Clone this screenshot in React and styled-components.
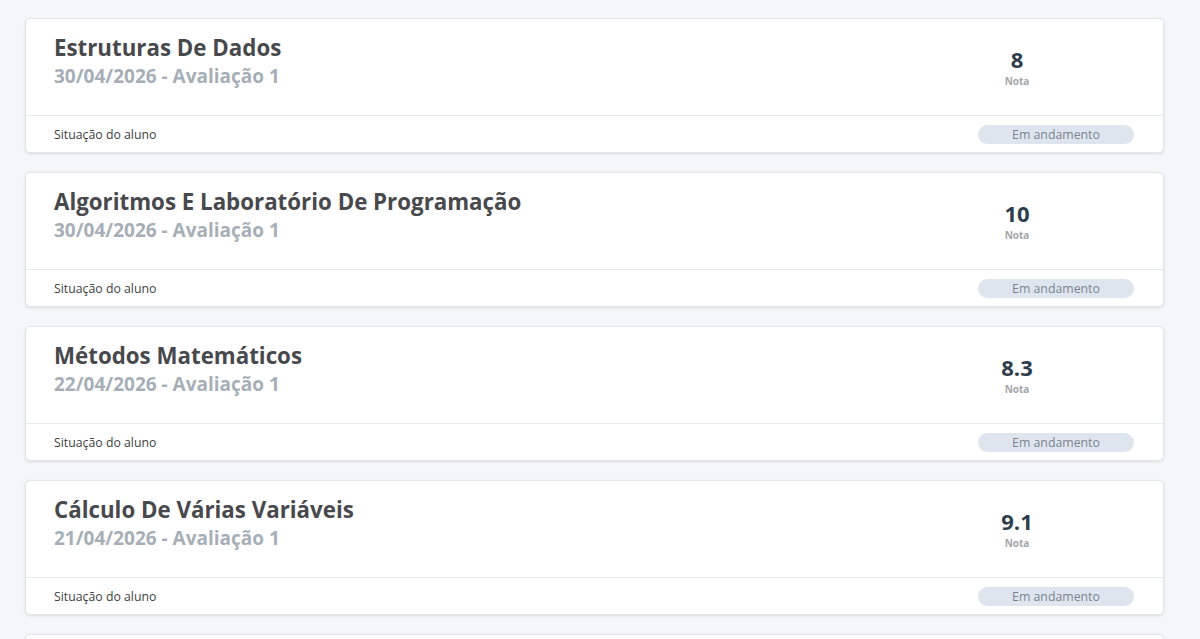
import styled, { createGlobalStyle } from "styled-components";

const GlobalStyle = createGlobalStyle`
  html, body {
    margin: 0;
    padding: 0;
    background: #f4f6f7;
    font-family: "Open Sans", "Noto Sans", sans-serif;
  }
`;

const grades = [
  { subject: "Estruturas De Dados", date: "30/04/2026", exam: "Avaliação 1", grade: "8" },
  { subject: "Algoritmos E Laboratório De Programação", date: "30/04/2026", exam: "Avaliação 1", grade: "10" },
  { subject: "Métodos Matemáticos", date: "22/04/2026", exam: "Avaliação 1", grade: "8.3" },
  { subject: "Cálculo De Várias Variáveis", date: "21/04/2026", exam: "Avaliação 1", grade: "9.1" },
];

function App() {
  return (
    <>
      <GlobalStyle />
      <PageStyled>
        {grades.map((g, i) => (
          <CardStyled key={i}>
            <div className="card-body">
              <div className="info">
                <h2>{g.subject}</h2>
                <h3>{g.date} - {g.exam}</h3>
              </div>
              <div className="grade">
                <span className="value">{g.grade}</span>
                <span className="label">Nota</span>
              </div>
            </div>
            <div className="card-footer">
              <span>Situação do aluno</span>
              <Badge>Em andamento</Badge>
            </div>
          </CardStyled>
        ))}
        {/* next card, only its top edge is in view */}
        <CardStyled $stub />
      </PageStyled>
    </>
  );
}

const PageStyled = styled.main`
  display: flex;
  flex-direction: column;
  gap: 19px;
  padding: 18px 36px 0 25px;
  height: 639px;
  overflow: hidden;
  box-sizing: border-box;
`;

const CardStyled = styled.section`
  flex-shrink: 0;
  min-height: ${(p) => (p.$stub ? "120px" : "auto")};
  background: #fff;
  border: 1px solid #e3e6e8;
  border-radius: 5px;
  box-shadow: 0 1px 3px rgba(0, 0, 0, 0.1);

  .card-body {
    display: flex;
    align-items: center;
    justify-content: space-between;
    height: 96px;
    padding: 0 29px 0 28px;
    border-bottom: 1px solid #e6e8ea;
  }
  .info {
    display: flex;
    flex-direction: column;
    margin-top: -12px;
  }
  h2 {
    margin: 0;
    font-size: 22.3px;
    font-weight: 700;
    line-height: 31px;
    color: #47494c;
  }
  h3 {
    margin: 0;
    font-size: 19px;
    font-weight: 700;
    line-height: 27px;
    color: #a6afb7;
  }
  .grade {
    display: flex;
    flex-direction: column;
    align-items: center;
    width: 100px;
    margin-right: 67px;
    margin-top: -2px;
  }
  .value {
    font-size: 22px;
    font-weight: 700;
    line-height: 28px;
    color: #2e3d4b;
  }
  .label {
    font-size: 10px;
    font-weight: 700;
    line-height: 14px;
    margin-top: 1px;
    color: #a3a6a9;
  }
  .card-footer {
    display: flex;
    align-items: center;
    justify-content: space-between;
    height: 36px;
    padding: 0 29px 0 28px;
    font-size: 12.3px;
    color: #3d3f41;
  }
`;

const Badge = styled.span`
  display: inline-flex;
  align-items: center;
  justify-content: center;
  width: 156px;
  height: 19px;
  border-radius: 10px;
  background: #dfe5ee;
  color: #7b8590;
  font-size: 12.3px;
`;

export default App;
